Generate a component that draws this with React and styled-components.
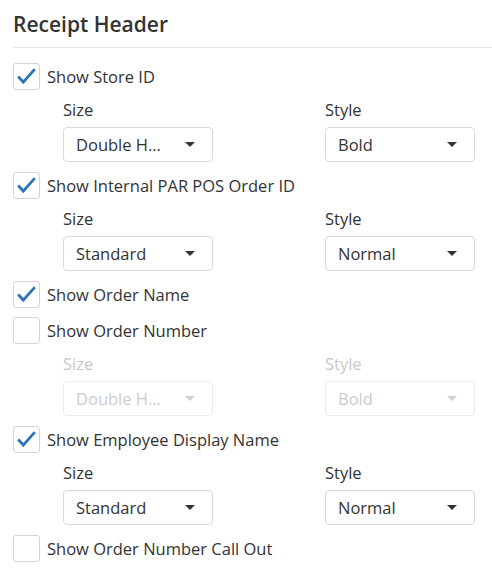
import React from "react";
import styled, { createGlobalStyle } from "styled-components";

const GlobalStyle = createGlobalStyle`
  html, body {
    margin: 0;
    padding: 0;
    background: #ffffff;
  }
  body {
    font-family: "Open Sans", "Noto Sans", sans-serif;
    color: #333333;
  }
`;

const options = [
  { label: "Show Store ID", checked: true, size: "Double H…", style: "Bold" },
  { label: "Show Internal PAR POS Order ID", checked: true, size: "Standard", style: "Normal" },
  { label: "Show Order Name", checked: true },
  { label: "Show Order Number", checked: false, size: "Double H…", style: "Bold" },
  { label: "Show Employee Display Name", checked: true, size: "Standard", style: "Normal" },
  { label: "Show Order Number Call Out", checked: false },
];

const CheckMark = () => (
  <svg width="27" height="27" viewBox="0 0 27 27">
    <path
      d="M4.5 13.5 L10 19.5 L22.5 5.5"
      fill="none"
      stroke="#2b74b9"
      strokeWidth="3"
      strokeLinecap="butt"
      strokeLinejoin="miter"
    />
  </svg>
);

const Select = ({ value, disabled }) => (
  <SelectBox $disabled={disabled}>
    <SelectValue>{value}</SelectValue>
    <Caret $disabled={disabled} />
  </SelectBox>
);

export default function App() {
  return (
    <Page>
      <GlobalStyle />
      <Title>Receipt Header</Title>
      <List>
        {options.map((opt) => (
          <Option key={opt.label}>
            <CheckRow>
              <Box>{opt.checked && <CheckMark />}</Box>
              <CheckLabel>{opt.label}</CheckLabel>
            </CheckRow>
            {opt.size && (
              <Settings>
                <Field>
                  <FieldLabel $disabled={!opt.checked}>Size</FieldLabel>
                  <Select value={opt.size} disabled={!opt.checked} />
                </Field>
                <Field>
                  <FieldLabel $disabled={!opt.checked}>Style</FieldLabel>
                  <Select value={opt.style} disabled={!opt.checked} />
                </Field>
              </Settings>
            )}
          </Option>
        ))}
      </List>
    </Page>
  );
}

const Page = styled.div`
  width: 492px;
  height: 568px;
  padding-left: 13px;
  box-sizing: border-box;
  overflow: hidden;
`;

const Title = styled.div`
  font-size: 21px;
  font-weight: 600;
  line-height: 28px;
  padding-top: 10px;
  padding-bottom: 9px;
  border-bottom: 1px solid #e3e3e3;
  color: #333333;
`;

const List = styled.div`
  display: flex;
  flex-direction: column;
  gap: 9px;
  padding-top: 15px;
`;

const Option = styled.div`
  display: flex;
  flex-direction: column;
`;

const CheckRow = styled.div`
  display: flex;
  align-items: center;
  gap: 7px;
  height: 27px;
`;

const Box = styled.div`
  width: 27px;
  height: 27px;
  box-sizing: border-box;
  border: 1px solid #d4d4d4;
  border-radius: 3px;
  display: flex;
  align-items: center;
  justify-content: center;
  background: #ffffff;
  svg {
    display: block;
  }
`;

const CheckLabel = styled.span`
  font-size: 16.5px;
  line-height: 20px;
  padding-top: 1px;
  color: #333333;
`;

const Settings = styled.div`
  display: grid;
  grid-template-columns: 150px 150px;
  column-gap: 112px;
  padding-left: 50px;
  padding-top: 9px;
  padding-bottom: 1px;
`;

const Field = styled.div`
  display: flex;
  flex-direction: column;
  gap: 7px;
`;

const FieldLabel = styled.div`
  font-size: 16.5px;
  line-height: 20px;
  padding-top: 1px;
  color: ${(p) => (p.$disabled ? "#c8c8c8" : "#333333")};
`;

const SelectBox = styled.div`
  height: 35px;
  box-sizing: border-box;
  border: 1px solid ${(p) => (p.$disabled ? "#ececec" : "#d9d9d9")};
  border-radius: 4px;
  display: flex;
  align-items: center;
  justify-content: space-between;
  padding: 0 17px 0 12px;
  color: ${(p) => (p.$disabled ? "#cccccc" : "#333333")};
  background: #ffffff;
`;

const SelectValue = styled.span`
  font-size: 16.5px;
  line-height: 20px;
  padding-top: 1px;
  white-space: nowrap;
`;

const Caret = styled.span`
  width: 0;
  height: 0;
  border-left: 5px solid transparent;
  border-right: 5px solid transparent;
  border-top: 5px solid ${(p) => (p.$disabled ? "#d0d0d0" : "#333333")};
`;
